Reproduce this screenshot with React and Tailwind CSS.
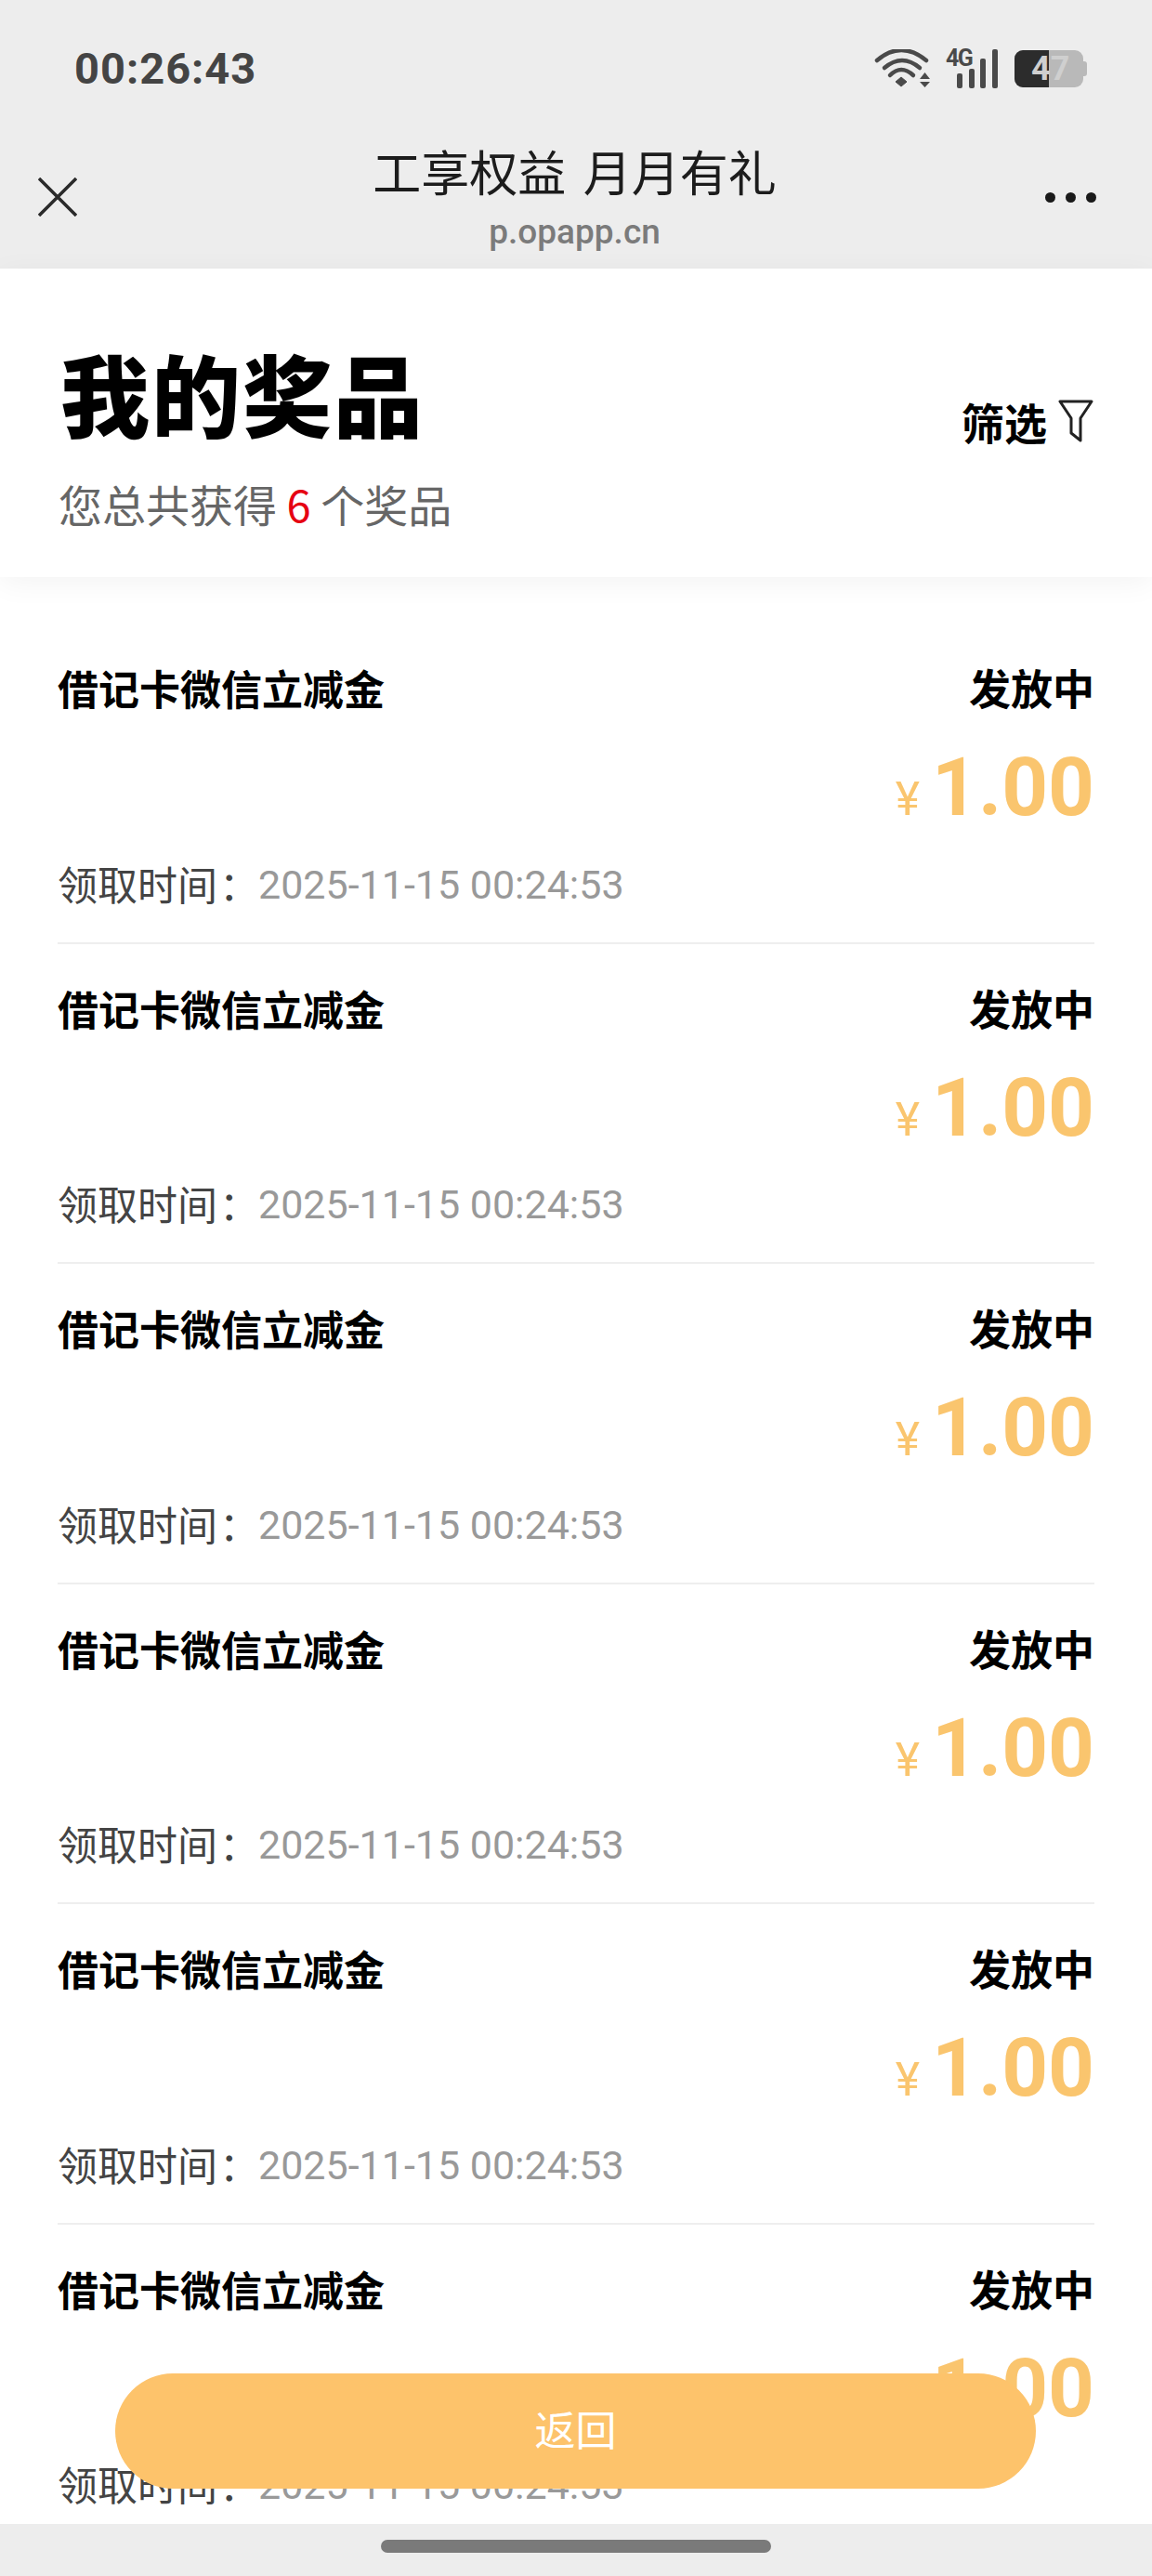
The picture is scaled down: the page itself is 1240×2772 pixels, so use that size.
import React from 'react';

const rows = [0, 1, 2, 3, 4, 5];

function Wifi() {
  return (
    <svg width="60" height="42" viewBox="0 0 60 42" fill="none" className="text-[#4a4a4a]">
      <path d="M3 12 Q29 -10 56 12" stroke="currentColor" strokeWidth="4.5" strokeLinecap="round" />
      <path d="M11 20 Q30 4 49 20" stroke="currentColor" strokeWidth="4.5" strokeLinecap="round" />
      <path d="M17 28 Q29 16 42 28" stroke="currentColor" strokeWidth="4.5" strokeLinecap="round" />
      <path d="M23 35 L29 30 L35 35 L29 40 Z" fill="currentColor" stroke="currentColor" strokeWidth="1" strokeLinejoin="round" />
      <path d="M49 32 L60 32 L54.5 25 Z" fill="currentColor" />
      <path d="M49 35 L60 35 L54.5 41 Z" fill="currentColor" />
    </svg>
  );
}

function Signal() {
  return (
    <div className="relative w-[57px] h-[42px]">
      <span className="absolute left-0 top-[-3px] text-[25px] leading-[25px] font-bold text-[#4a4a4a] tracking-[-1.5px] font-['Roboto',sans-serif]">4G</span>
      <svg width="57" height="42" viewBox="0 0 57 42" className="text-[#4a4a4a]">
        <rect x="12" y="26" width="6" height="16" rx="2" fill="currentColor" />
        <rect x="25" y="21" width="6" height="21" rx="2" fill="currentColor" />
        <rect x="37" y="10" width="6" height="32" rx="2" fill="currentColor" />
        <rect x="50" y="0" width="6" height="42" rx="2" fill="currentColor" />
      </svg>
    </div>
  );
}

function Battery() {
  return (
    <div className="relative w-[78px] h-[40px]">
      <div className="absolute left-0 top-0 w-[74px] h-[40px] rounded-[9px] bg-[#b9b9b9] overflow-hidden">
        <div className="h-full w-[37px] bg-[#2c2c2c]" />
      </div>
      <div className="absolute right-0 top-[12px] w-[4px] h-[16px] rounded-r-[3px] bg-[#b9b9b9]" />
      <span className="absolute left-[18px] top-[2px] text-[36px] leading-[36px] font-bold text-[#cfcfcf] font-['Roboto',sans-serif]">47</span>
    </div>
  );
}

function Row() {
  return (
    <div className="mx-[62px] h-[344.5px] border-b-2 border-[#eeeeee] shrink-0 pt-[39px]">
      <div className="flex justify-between text-[44px] leading-[60px] font-bold text-black">
        <span>借记卡微信立减金</span>
        <span className="text-[45px]">发放中</span>
      </div>
      <div className="flex justify-end items-baseline h-[103px] mt-[26px] text-[#fac56e] font-['Roboto',sans-serif] font-bold">
        <span className="text-[50px] font-normal mr-[13px]">¥</span>
        <span className="text-[87px] leading-[103px]">1.00</span>
      </div>
      <div className="flex items-center h-[60px] mt-[23px] whitespace-nowrap">
        <span className="text-[#444444] text-[43px] leading-[54px] w-[216px] -mt-[5px]">
          领取时间<span className="ml-[2px]">：</span>
        </span>
        <span className="text-[#999999] text-[43px] font-['Roboto',sans-serif]">2025-11-15 00:24:53</span>
      </div>
    </div>
  );
}

export default function App() {
  return (
    <div className="relative w-[1240px] h-[2772px] overflow-hidden bg-white font-['Noto_Sans_CJK_SC','Noto_Sans',sans-serif]">
      {/* status + nav */}
      <div className="h-[289px] bg-[#ededed] flex flex-col">
        <div className="flex items-center justify-between pl-[80px] pr-[70px] pt-[53px] h-[95px]">
          <span className="text-[47px] leading-[42px] font-bold text-[#444444] tracking-[1px] font-['Roboto',sans-serif]">00:26:43</span>
          <div className="flex items-center gap-[17px]">
            <Wifi />
            <Signal />
            <Battery />
          </div>
        </div>
        <div className="grid grid-cols-[1fr_auto_1fr] items-center pl-[41px] pr-[60px] flex-1">
          <svg width="42" height="42" viewBox="0 0 42 42" fill="none" className="mt-[40px]">
            <path d="M1 1 L41 41 M41 1 L1 41" stroke="#2a2a2a" strokeWidth="3.5" />
          </svg>
          <div className="flex flex-col items-center pt-[31px] translate-x-[8px]">
            <span className="text-[52px] leading-[76px] text-[#1c1c1c] [word-spacing:7px]">工享权益 月月有礼</span>
            <span className="text-[37px] leading-[38px] mt-[9px] font-medium text-[#7b7b7b] font-['Roboto',sans-serif]">p.opapp.cn</span>
          </div>
          <div className="flex gap-[11px] mt-[40px] justify-end">
            <span className="w-[11px] h-[11px] rounded-full bg-[#1a1a1a]" />
            <span className="w-[11px] h-[11px] rounded-full bg-[#1a1a1a]" />
            <span className="w-[11px] h-[11px] rounded-full bg-[#1a1a1a]" />
          </div>
        </div>
      </div>

      {/* title card */}
      <div className="h-[332px] px-[63px] flex items-start justify-between bg-white shadow-[0_6px_30px_rgba(0,0,0,0.05)] relative">
        <div>
          <div className="pt-[73px] pl-[2px] text-[96px] leading-[120px] font-black text-black tracking-[2px]">我的奖品</div>
          <div className="mt-[27px] text-[47px] leading-[66px] text-[#666666]">
            您总共获得 <span className="text-[#e60012]">6</span> 个奖品
          </div>
        </div>
        <div className="flex items-center gap-[12px] mt-[132px]">
          <span className="text-[46px] leading-[64px] font-bold text-black">筛选</span>
          <svg width="38" height="46" viewBox="0 0 38 46" fill="none">
            <path d="M2 2 H36 L24 20 V44 L14 36 V20 Z" stroke="#222222" strokeWidth="3" strokeLinejoin="round" />
          </svg>
        </div>
      </div>

      {/* list */}
      <div className="pt-[50px] flex flex-col">
        {rows.map((r) => (
          <Row key={r} />
        ))}
      </div>

      {/* floating button */}
      <div className="absolute left-[124px] top-[2554px] w-[991px] h-[124px] rounded-full bg-[#fdc36b] flex items-center justify-center pb-[6px] text-[44px] text-white">
        返回
      </div>

      {/* home indicator */}
      <div className="absolute left-0 top-[2716px] w-full h-[56px] bg-[#ededed] flex justify-center pt-[17px]">
        <div className="w-[420px] h-[14px] rounded-full bg-[#7a7a7a]" />
      </div>
    </div>
  );
}
